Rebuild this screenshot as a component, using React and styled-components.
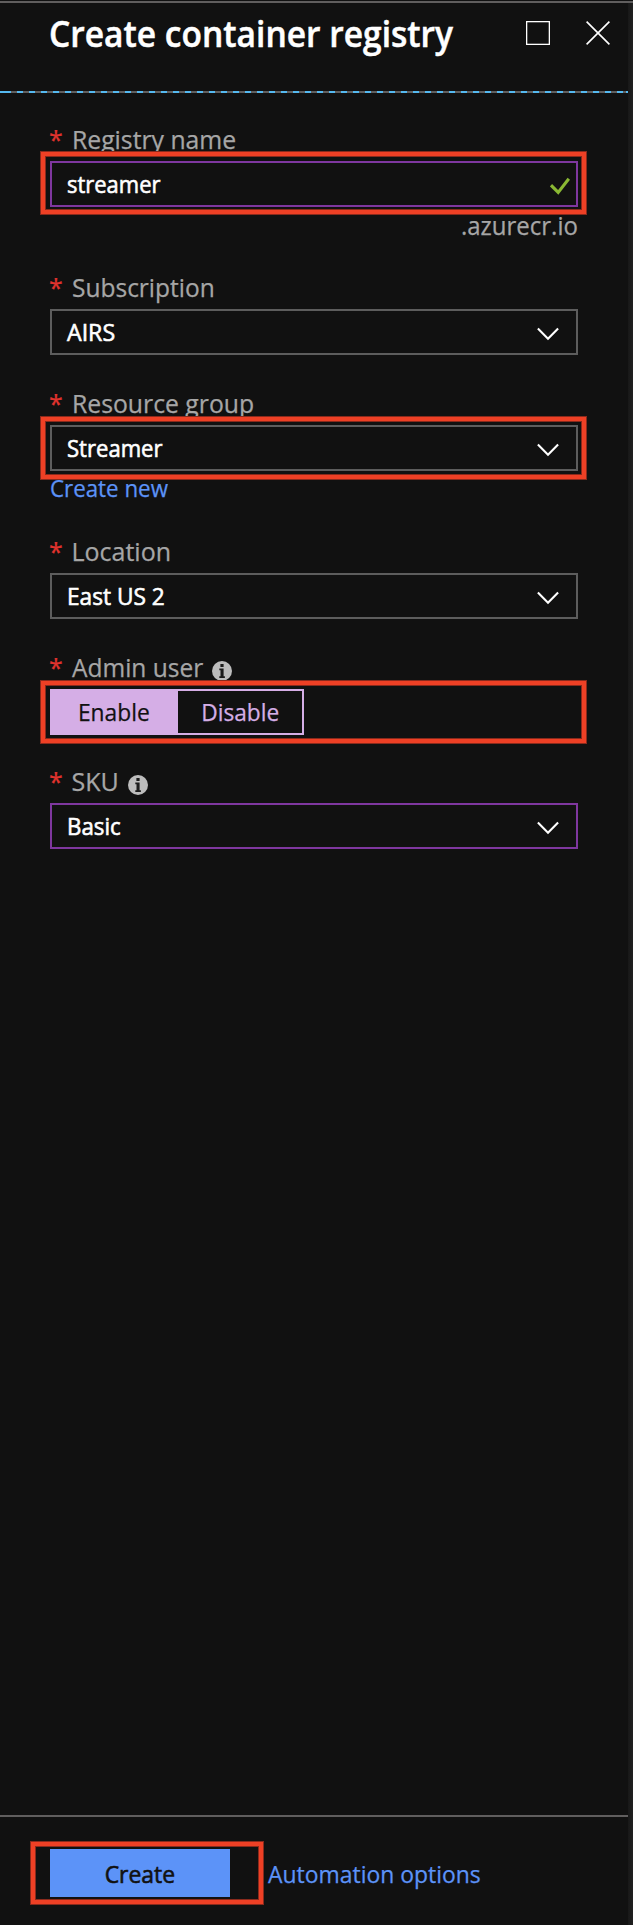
import React from 'react';
import styled, { createGlobalStyle, css } from 'styled-components';

const c = {
  bg: '#111111',
  rule: '#605e5e',
  label: '#a6a6a6',
  link: '#5c93f8',
  purple: '#7f379f',
  lilac: '#d5aee6',
  red: '#ee4025',
  redEdge: '#8a2a1c',
};

const Global = createGlobalStyle`
  *, *::before, *::after { box-sizing: border-box; }
  body { margin: 0; background: ${c.bg}; }
  button { font: inherit; padding: 0; border: 0; background: none; }
  svg { display: block; flex: none; }
`;

const Page = styled.div`
  display: flex;
  flex-direction: column;
  height: 1925px;
  padding-top: 1px;
  font-family: 'Open Sans', 'Noto Sans', sans-serif;
  font-size: 24px;
  color: #fff;
  overflow: hidden;
  -webkit-text-stroke: 0.25px currentColor;
`;

const TopRule = styled.div`
  height: 2px;
  flex: none;
  background: ${c.rule};
`;

const Columns = styled.div`
  display: flex;
  flex: 1;
`;

const Blade = styled.main`
  display: flex;
  flex-direction: column;
  width: 628px;
`;

const Gutter = styled.div`
  flex: 1;
  background: linear-gradient(to right, #181818, #202020);
`;

const Header = styled.header`
  display: flex;
  align-items: flex-start;
  height: 88px;
  padding: 0 18px 0 49px;
`;

/* Condenses a run of text horizontally from its start. */
const Run = styled.span`
  display: inline-block;
  white-space: pre;
  transform: scaleX(${(p) => p.$fit || 1});
  transform-origin: ${(p) => p.$from || 'left'} center;
`;

const Title = styled.h1`
  flex: 1;
  margin: 0;
  font-size: 36px;
  font-weight: 600;
  line-height: 62px;
  -webkit-text-stroke: 0.5px currentColor;
`;

const WindowButtons = styled.div`
  display: flex;
  gap: 36px;
  padding-top: 18px;
`;

const DashedRule = styled.div`
  height: 2px;
  background: repeating-linear-gradient(
    to right,
    #55b9f0 0 6px,
    ${c.rule} 6px 12px
  );
  background-position-x: 5px;
  border-left: 2px solid #55b9f0;
  border-right: 2px solid #55b9f0;
  background-origin: border-box;
`;

const Form = styled.form`
  flex: 1;
  padding: 29px 50px 0;
`;

const Field = styled.div`
  margin-bottom: ${(p) => p.$gap || 31}px;
`;

const LabelRow = styled.label`
  display: flex;
  align-items: center;
  height: 34px;
  margin-bottom: 5px;
  margin-left: -1px;
  font-size: 25px;
  line-height: 34px;
  color: ${c.label};
`;

const Star = styled.span`
  width: 22.5px;
  color: #e0332e;
`;

const InfoSlot = styled.span`
  margin: 8px 0 0 ${(p) => p.$gap}px;
`;

const highlight = css`
  position: relative;
  &::after {
    content: '';
    position: absolute;
    inset: ${(p) => p.$ring};
    border: 4px solid ${c.red};
    box-shadow: 0 0 0 1px ${c.redEdge}, inset 0 0 0 1px ${c.redEdge};
    pointer-events: none;
  }
`;

const Control = styled.div`
  ${(p) => p.$ring && highlight}
`;

const InputBox = styled.div`
  display: flex;
  align-items: center;
  justify-content: space-between;
  height: 46px;
  padding: 0 ${(p) => p.$right || 17}px 0 15px;
  border: 2px solid ${(p) => (p.$accent ? c.purple : '#5d5d5d')};
  line-height: 42px;
  -webkit-text-stroke: 0.6px #fff;

  svg {
    margin-top: 3px;
  }
`;

const Suffix = styled.div`
  height: 32px;
  font-size: 25px;
  line-height: 36px;
  text-align: right;
  color: ${c.label};
`;

const SubLink = styled.div`
  height: 32px;
  line-height: 34px;
  color: ${c.link};
`;

const Toggle = styled.div`
  display: flex;
  width: 254px;
  height: 46px;
  border: 2px solid ${c.lilac};
`;

const Option = styled.button`
  width: ${(p) => (p.$on ? 126 : 124)}px;
  padding-right: ${(p) => (p.$on ? 3 : 0)}px;
  background: ${(p) => (p.$on ? c.lilac : 'transparent')};
  color: ${(p) => (p.$on ? '#111' : c.lilac)};
  line-height: 42px;
`;

const Footer = styled.footer`
  display: flex;
  align-items: flex-start;
  gap: 38px;
  height: 110px;
  padding: 32px 50px 0;
  border-top: 2px solid ${c.rule};
`;

const CreateButton = styled.button`
  width: 180px;
  height: 48px;
  padding-top: 1px;
  background: ${c.link};
  color: #111;
  line-height: 47px;
  -webkit-text-stroke: 0.6px #111;
`;

const FooterLink = styled.a`
  line-height: 49px;
  color: ${c.link};
`;

const Maximize = () => (
  <svg width="24" height="24" viewBox="0 0 24 24">
    <rect x="0.65" y="0.65" width="22.7" height="22.7" fill="none" stroke="#fff" strokeWidth="1.3" />
  </svg>
);

const Close = () => (
  <svg width="24" height="24" viewBox="0 0 24 24">
    <path d="M.6.6l22.8 22.8M23.4.6L.6 23.4" stroke="#fff" strokeWidth="1.6" />
  </svg>
);

const Chevron = () => (
  <svg width="22" height="14" viewBox="0 0 22 14">
    <path d="M.9 1.6L11 11.7 21.1 1.6" fill="none" stroke="#fff" strokeWidth="2.1" />
  </svg>
);

const Check = () => (
  <svg width="20" height="18" viewBox="0 0 20 18">
    <path d="M1 8.2l7.2 7.2L18.8 1.8" fill="none" stroke="#8ab833" strokeWidth="3.1" />
  </svg>
);

const Info = () => (
  <svg width="20" height="20" viewBox="0 0 20 20">
    <circle cx="10" cy="10" r="10" fill="#bdbdbd" />
    <path d="M8.4 3h3.2v3H8.4zM7.3 7.6h4.3v7.6h1.3v1.7H7.3v-1.7h1.2V9.3H7.3z" fill="#1c1c1c" />
  </svg>
);

const Label = ({ text, fit, infoGap }) => (
  <LabelRow>
    <Star>*</Star>
    <Run $fit={fit}>{text}</Run>
    {infoGap && (
      <InfoSlot $gap={infoGap}>
        <Info />
      </InfoSlot>
    )}
  </LabelRow>
);

const Select = ({ value, fit, accent, ring }) => (
  <Control $ring={ring}>
    <InputBox $accent={accent}>
      <Run $fit={fit}>{value}</Run>
      <Chevron />
    </InputBox>
  </Control>
);

export default function App() {
  return (
    <>
      <Global />
      <Page>
        <TopRule />
        <Columns>
          <Blade>
            <Header>
              <Title>
                <Run $fit={0.932}>Create container registry</Run>
              </Title>
              <WindowButtons>
                <Maximize />
                <Close />
              </WindowButtons>
            </Header>
            <DashedRule />
            <Form>
              <Field>
                <Label text="Registry name" fit={0.99} />
                <Control $ring="-9px -8px -7px -9px">
                  <InputBox $accent $right={6}>
                    <Run $fit={0.915}>streamer</Run>
                    <Check />
                  </InputBox>
                </Control>
                <Suffix>
                  <Run $fit={0.96} $from="right">.azurecr.io</Run>
                </Suffix>
              </Field>
              <Field>
                <Label text="Subscription" fit={0.98} />
                <Select value="AIRS" fit={0.965} />
              </Field>
              <Field>
                <Label text="Resource group" fit={0.99} />
                <Select value="Streamer" fit={0.92} ring="-8px -8px -8px -9px" />
                <SubLink>
                  <Run $fit={0.93}>Create new</Run>
                </SubLink>
              </Field>
              <Field>
                <Label text="Location" />
                <Select value="East US 2" fit={0.945} />
              </Field>
              <Field $gap={29}>
                <Label text="Admin user" fit={0.98} infoGap={6.5} />
                <Control $ring="-8px -8px -8px -9px">
                  <Toggle>
                    <Option type="button" $on>
                      <Run $fit={0.95} $from="center">Enable</Run>
                    </Option>
                    <Option type="button">
                      <Run $fit={0.945} $from="center">Disable</Run>
                    </Option>
                  </Toggle>
                </Control>
              </Field>
              <Field>
                <Label text="SKU" infoGap={9.5} />
                <Select value="Basic" fit={0.93} accent />
              </Field>
            </Form>
            <Footer>
              <Control $ring="-7px -33px -7px -19px">
                <CreateButton>
                  <Run $fit={0.955} $from="center">Create</Run>
                </CreateButton>
              </Control>
              <FooterLink>
                <Run $fit={0.955}>Automation options</Run>
              </FooterLink>
            </Footer>
          </Blade>
          <Gutter />
        </Columns>
      </Page>
    </>
  );
}
